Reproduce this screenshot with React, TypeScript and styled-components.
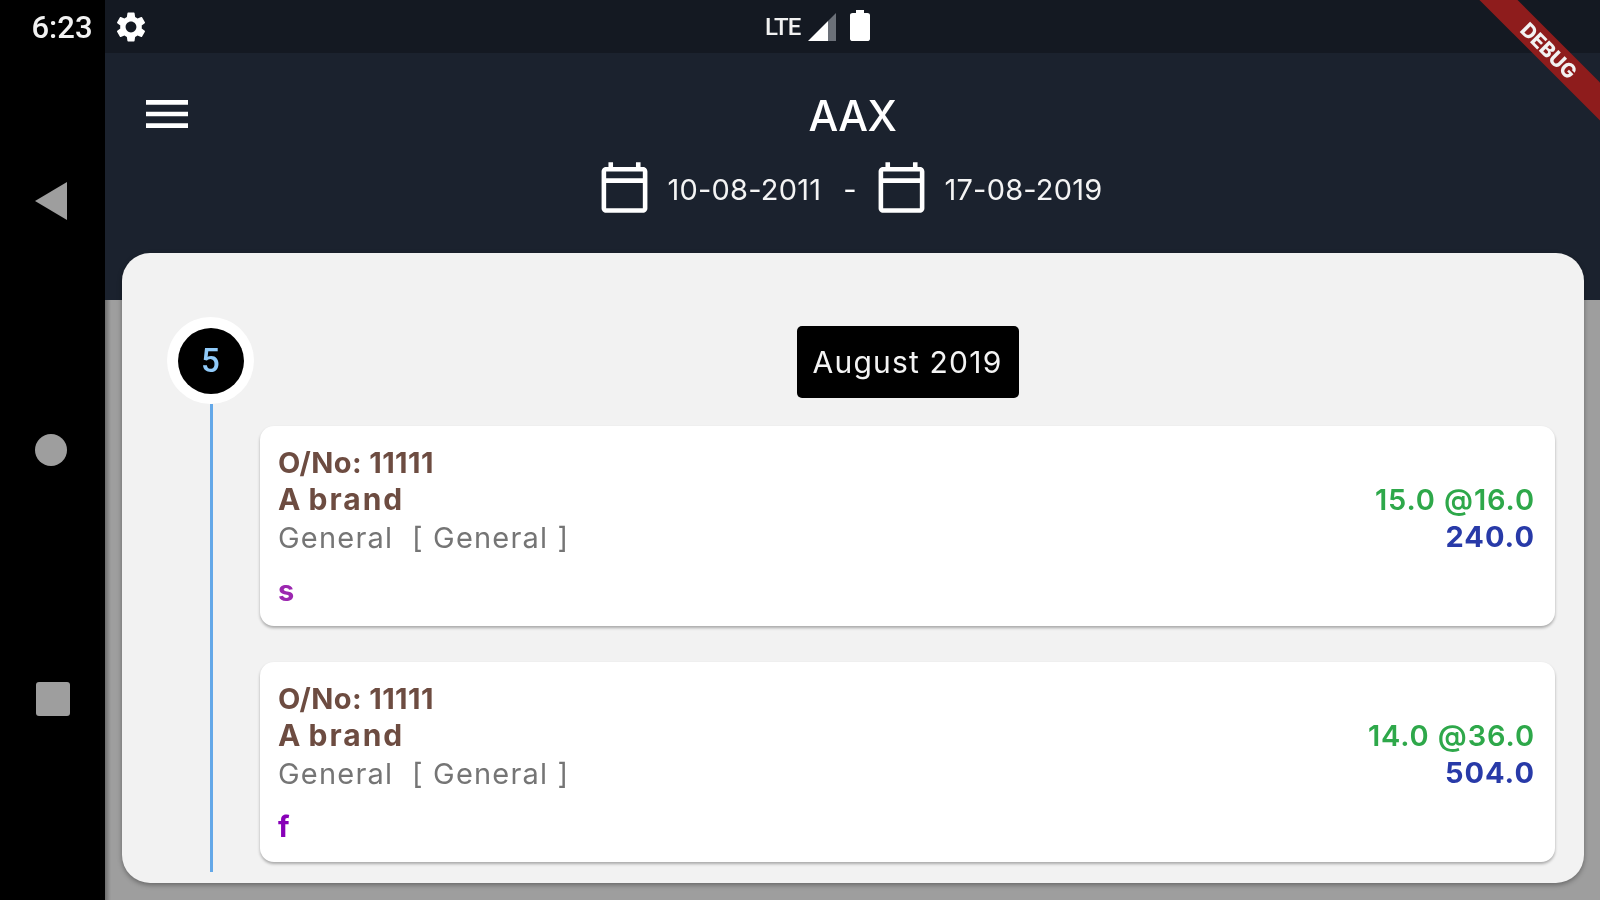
import React from 'react';
import styled, { createGlobalStyle } from 'styled-components';
import { MdMenu, MdSettings, MdOutlineCalendarToday } from 'react-icons/md';

const orders = [
    { brand: 'A brand', qty: '15.0 @16.0', total: '240.0', note: 's', noteColor: '#9c27b0' },
    { brand: 'A brand', qty: '14.0 @36.0', total: '504.0', note: 'f', noteColor: '#8800b8' },
];

const GlobalStyle = createGlobalStyle`
    html, body {
        margin: 0;
        width: 1600px;
        height: 900px;
        overflow: hidden;
        background: #000;
    }
    * { box-sizing: border-box; }
`;

export default function App() {
    return (
        <Screen>
            <GlobalStyle />
            <NavBar>
                <Clock>6:23</Clock>
                <NavButtons>
                    <BackButton />
                    <HomeButton />
                    <RecentButton />
                </NavButtons>
            </NavBar>
            <Main>
                <StatusBar>
                    <MdSettings size={36} color="#fff" />
                    <StatusIcons>
                        <Lte>LTE</Lte>
                        <svg width="29" height="28" viewBox="0 0 29 28">
                            <polygon points="0,28 20,8 20,28" fill="#fff" />
                            <polygon points="20,8 28,0 28,28 20,28" fill="#6b7078" />
                        </svg>
                        <Battery viewBox="7 2 10 20" preserveAspectRatio="none">
                            <path d="M15.67 4H14V2h-4v2H8.33C7.6 4 7 4.6 7 5.33v15.33C7 21.4 7.6 22 8.33 22h7.33c.74 0 1.34-.6 1.34-1.33V5.33C17 4.6 16.4 4 15.67 4z" fill="#fff" />
                        </Battery>
                    </StatusIcons>
                </StatusBar>
                <AppBar>
                    <MenuButton>
                        <MdMenu size={56} color="#fff" />
                    </MenuButton>
                    <TitleBlock>
                        <Title>AAX</Title>
                        <DateRow>
                            <MdOutlineCalendarToday size={55} color="#fff" />
                            <DateText>10-08-2011</DateText>
                            <DateDash>-</DateDash>
                            <MdOutlineCalendarToday size={55} color="#fff" />
                            <DateText>17-08-2019</DateText>
                        </DateRow>
                    </TitleBlock>
                </AppBar>
                <Panel>
                    <Timeline>
                        <CountBadge>
                            <CountInner>5</CountInner>
                        </CountBadge>
                        <TimelineLine />
                    </Timeline>
                    <Content>
                        <MonthLabel>August 2019</MonthLabel>
                        <OrderList>
                            {orders.map((order) => (
                                <OrderCard key={order.note}>
                                    <OrderInfo>
                                        <OrderNo>O/No: 11111</OrderNo>
                                        <Brand>{order.brand}</Brand>
                                        <Category>General&nbsp;&nbsp;[ General ]</Category>
                                        <Note $color={order.noteColor}>{order.note}</Note>
                                    </OrderInfo>
                                    <Amounts>
                                        <Qty>{order.qty}</Qty>
                                        <Total>{order.total}</Total>
                                    </Amounts>
                                </OrderCard>
                            ))}
                        </OrderList>
                    </Content>
                </Panel>
                <Ribbon>
                    <RibbonBand>DEBUG</RibbonBand>
                </Ribbon>
            </Main>
        </Screen>
    );
}

const Screen = styled.div`
    display: flex;
    width: 1600px;
    height: 900px;
    font-family: Inter, "Liberation Sans", sans-serif;
    filter: blur(0.7px);
`;

const NavBar = styled.div`
    width: 105px;
    flex-shrink: 0;
    background: #000;
    display: flex;
    flex-direction: column;
    align-items: center;
`;

const Clock = styled.div`
    height: 53px;
    margin-left: 19px;
    line-height: 55px;
    font-family: Roboto, sans-serif;
    font-size: 31px;
    font-weight: 500;
    color: #f2f2f2;
`;

const NavButtons = styled.div`
    padding: 129px 3px 0 0;
    display: flex;
    flex-direction: column;
    align-items: center;
    gap: 214px;
`;

const BackButton = styled.div`
    width: 32px;
    height: 38px;
    background: #9e9e9e;
    clip-path: polygon(0 50%, 100% 0, 100% 100%);
`;

const HomeButton = styled.div`
    width: 32px;
    height: 32px;
    border-radius: 50%;
    background: #9e9e9e;
`;

const RecentButton = styled.div`
    width: 34px;
    height: 34px;
    margin: 2px 0 0 4px;
    border-radius: 3px;
    background: #9e9e9e;
`;

const Main = styled.div`
    position: relative;
    flex: 1;
    display: flex;
    flex-direction: column;
    overflow: hidden;
    background: linear-gradient(90deg, #6e6e6e 0, #9e9e9e 6px);
`;

const StatusBar = styled.div`
    height: 53px;
    padding-left: 8px;
    display: flex;
    align-items: center;
    background: #141922;
`;

const StatusIcons = styled.div`
    margin-left: 616px;
    display: flex;
    align-items: center;
    gap: 8px;
`;

const Lte = styled.span`
    font-family: Roboto, sans-serif;
    font-size: 24px;
    font-weight: 500;
    letter-spacing: -1px;
    color: #f2f2f2;
`;

const Battery = styled.svg`
    width: 20px;
    height: 31px;
    margin-left: 5px;
    margin-bottom: 2px;
`;

const AppBar = styled.div`
    height: 247px;
    flex-shrink: 0;
    padding: 16px 0 0 0;
    display: grid;
    grid-template-columns: 1fr auto 1fr;
    background: #1b222e;
    color: #fff;
`;

const MenuButton = styled.div`
    padding: 17px 0 0 34px;
`;

const TitleBlock = styled.div`
    display: flex;
    flex-direction: column;
    align-items: center;
`;

const Title = styled.div`
    margin-top: 21px;
    font-size: 42px;
    line-height: 52px;
    font-weight: 500;
    letter-spacing: -0.5px;
`;

const DateRow = styled.div`
    margin: 18px 6px 0 0;
    display: flex;
    align-items: center;
    gap: 16px;
`;

const DateText = styled.span`
    margin-top: 4px;
    font-size: 29px;
    font-weight: 400;
    letter-spacing: 0.2px;
    color: #f4f4f4;
`;

const DateDash = styled.span`
    margin: 4px 1px 0 6px;
    font-size: 29px;
    font-weight: 400;
`;

const Panel = styled.div`
    height: 630px;
    flex-shrink: 0;
    margin: -47px 16px 0 17px;
    padding: 64px 29px 11px 45px;
    display: flex;
    border-radius: 28px;
    background: #f2f2f2;
    box-shadow: 0 2px 5px rgba(0, 0, 0, 0.35);
`;

const Timeline = styled.div`
    width: 87px;
    flex-shrink: 0;
    display: flex;
    flex-direction: column;
    align-items: center;
`;

const CountBadge = styled.div`
    width: 87px;
    height: 87px;
    flex-shrink: 0;
    display: flex;
    align-items: center;
    justify-content: center;
    border-radius: 50%;
    background: #fff;
`;

const CountInner = styled.div`
    width: 66px;
    height: 66px;
    display: flex;
    align-items: center;
    justify-content: center;
    border-radius: 50%;
    background: #000;
    font-family: Roboto, sans-serif;
    font-size: 33px;
    font-weight: 500;
    color: #90caf9;
`;

const TimelineLine = styled.div`
    width: 3px;
    margin-left: 1px;
    flex: 1;
    background: #64a8e8;
`;

const Content = styled.div`
    flex: 1;
    margin-left: 6px;
    padding-top: 9px;
    display: flex;
    flex-direction: column;
    align-items: center;
`;

const MonthLabel = styled.div`
    width: 222px;
    height: 72px;
    display: flex;
    align-items: center;
    justify-content: center;
    border-radius: 5px;
    background: #000;
    font-size: 30px;
    font-weight: 400;
    letter-spacing: 1.2px;
    color: #f4f4f4;
`;

const OrderList = styled.div`
    width: 100%;
    margin-top: 28px;
    display: flex;
    flex-direction: column;
    gap: 36px;
`;

const OrderCard = styled.div`
    height: 200px;
    padding: 17.5px 20px 0 18px;
    display: flex;
    justify-content: space-between;
    border-radius: 14px;
    background: #fff;
    box-shadow: 0 2px 3px rgba(0, 0, 0, 0.3);
`;

const OrderInfo = styled.div`
    display: flex;
    flex-direction: column;
`;

const OrderNo = styled.div`
    font-size: 29px;
    line-height: 37.5px;
    font-weight: 700;
    letter-spacing: 0.4px;
    color: #6d4c41;
`;

const Brand = styled.div`
    font-size: 30px;
    line-height: 37.5px;
    font-weight: 700;
    letter-spacing: 2px;
    word-spacing: -3px;
    color: #6d4c41;
`;

const Category = styled.div`
    font-size: 29px;
    line-height: 37.5px;
    font-weight: 400;
    letter-spacing: 1.2px;
    color: #757575;
`;

const Note = styled.div<{ $color: string }>`
    margin-top: 16px;
    font-size: 29px;
    line-height: 37.5px;
    font-weight: 700;
    color: ${(p) => p.$color};
`;

const Amounts = styled.div`
    padding-top: 37px;
    display: flex;
    flex-direction: column;
    align-items: flex-end;
`;

const Qty = styled.div`
    font-size: 29px;
    line-height: 37.5px;
    font-weight: 600;
    letter-spacing: 0.9px;
    color: #2ea84a;
`;

const Total = styled.div`
    font-size: 29px;
    line-height: 37.5px;
    font-weight: 700;
    letter-spacing: 1px;
    color: #283aa8;
`;

const Ribbon = styled.div`
    position: absolute;
    top: 0;
    right: 0;
    width: 125px;
    height: 130px;
    overflow: hidden;
`;

const RibbonBand = styled.div`
    position: absolute;
    top: 37px;
    left: -46px;
    width: 240px;
    height: 27px;
    transform: rotate(45deg);
    display: flex;
    align-items: center;
    justify-content: center;
    background: #8e1c1c;
    font-size: 20px;
    font-weight: 800;
    color: #f2f2f2;
`;
